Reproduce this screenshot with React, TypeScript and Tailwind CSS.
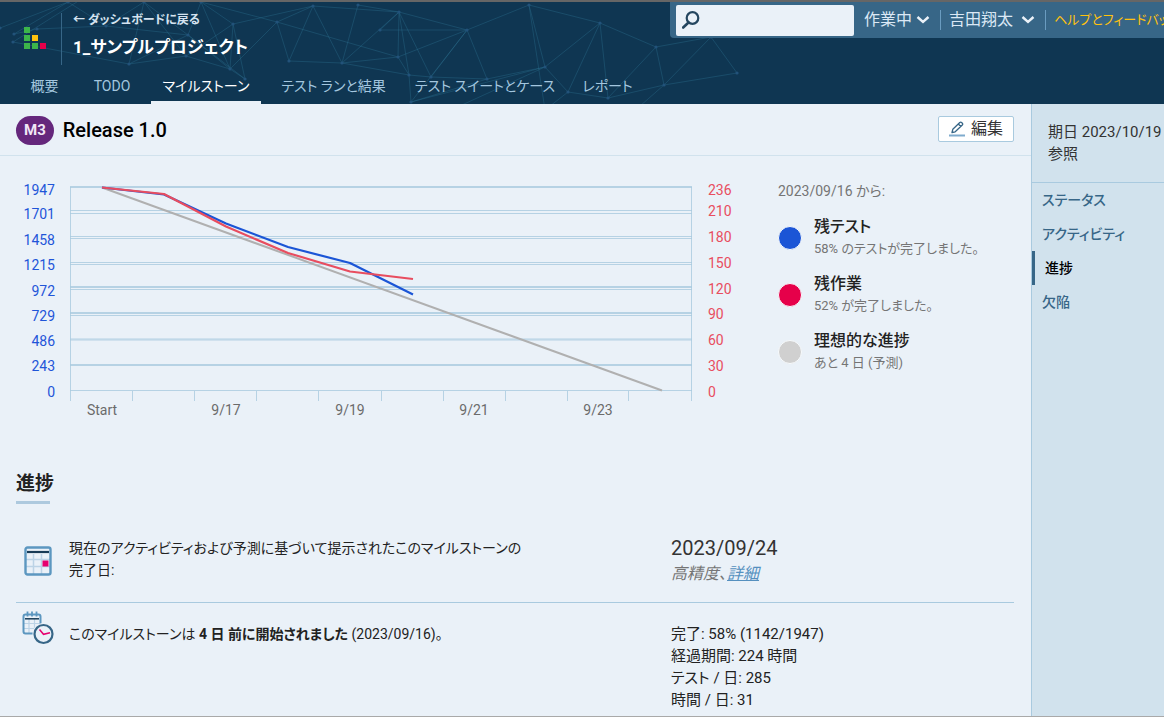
import { ReactNode } from "react";

const nodes = [
  [68, 2], [144, 2], [201, 2], [0, 28], [14, 34], [13, 42], [37, 29], [129, 64], [106, 26], [188, 35],
  [186, 56], [230, 69], [245, 79], [233, 24], [277, 22], [289, 61], [313, 6], [342, 63], [358, 5], [399, 12],
  [398, 57], [409, 75], [431, 77], [411, 102], [467, 30], [487, 79], [529, 5], [545, 67], [568, 92], [600, 23],
  [608, 98], [656, 47], [664, 85], [711, 37], [737, 73], [380, 30], [545, 110], [440, 115], [640, 106], [80, 0],
];

const edges = [
  [0, 3], [0, 4], [0, 8], [5, 39], [4, 6], [6, 8], [5, 7], [1, 7], [1, 9], [1, 10], [1, 8], [2, 9], [2, 13], [2, 14],
  [8, 9], [7, 9], [7, 10], [9, 11], [9, 12], [10, 11], [10, 13], [11, 13], [11, 12], [12, 13], [13, 16], [14, 16],
  [14, 15], [14, 11], [15, 16], [16, 17], [16, 19], [17, 18], [17, 19], [18, 19], [17, 20], [15, 17], [17, 21],
  [19, 24], [19, 20], [19, 21], [19, 22], [20, 24], [20, 21], [21, 22], [21, 23], [22, 24], [22, 25], [24, 25],
  [24, 26], [25, 27], [26, 27], [26, 29], [27, 29], [27, 28], [28, 29], [28, 30], [29, 30], [29, 31], [27, 23],
  [30, 31], [30, 32], [31, 32], [31, 33], [32, 33], [32, 34], [33, 34], [26, 36], [23, 25], [37, 27], [32, 38],
  [24, 35], [24, 23], [35, 19], [28, 36], [2, 11], [14, 20],
];

const tabs = [
  { label: "概要", width: "w-[57px]" },
  { label: "TODO", width: "w-16" },
  { label: "マイルストーン", width: "w-[110px]" },
  { label: "テスト ランと結果", width: "w-[131px]" },
  { label: "テスト スイートとケース", width: "w-[158px]" },
  { label: "レポート", width: "w-[73px]" },
];
const sections = ["ステータス", "アクティビティ", "進捗", "欠陥"];

const legend = [
  { title: "残テスト", text: "58% のテストが完了しました。", dot: "bg-[#1b55d6]" },
  { title: "残作業", text: "52% が完了しました。", dot: "bg-[#e6004a]" },
  { title: "理想的な進捗", text: "あと 4 日 (予測)", dot: "bg-[#d0d0d0]" },
];

const leftAxis = [
  ["1947", 195], ["1701", 219], ["1458", 245], ["1215", 270], ["972", 296],
  ["729", 321], ["486", 346], ["243", 371], ["0", 397],
] as const;
const rightAxis = [
  ["236", 195], ["210", 216], ["180", 242], ["150", 268], ["120", 294],
  ["90", 319], ["60", 345], ["30", 371], ["0", 397],
] as const;
const dates = [["Start", 102], ["9/17", 226], ["9/19", 350], ["9/21", 474], ["9/23", 598]] as const;

const gridLines = [186.5, 187.5, 210.5, 213.5, 236.5, 238.5, 262.5, 264.5, 286.5, 287.5, 289.5, 312.5, 313.5, 315.5, 339, 340, 364.5, 365.5, 390.5];
const ticks = [70.5, 132.5, 194.5, 256.5, 318.5, 381.5, 443.5, 505.5, 567.5, 628.5, 691.5];

function Network() {
  return (
    <svg width="760" height="102" viewBox="0 2 760 102" className="absolute left-0 top-0" aria-hidden="true">
      <g stroke="#2f7596" strokeOpacity="0.35">
        {edges.map(([a, b]) => (
          <line key={`${a}-${b}`} x1={nodes[a][0]} y1={nodes[a][1]} x2={nodes[b][0]} y2={nodes[b][1]} />
        ))}
      </g>
      <g fill="#22527a">
        {nodes.map(([x, y]) => (
          <circle key={`${x}-${y}`} cx={x} cy={y} r="1.6" />
        ))}
      </g>
    </svg>
  );
}

function Logo() {
  return (
    <svg width="22" height="22" viewBox="0 0 22 22" className="mt-2" aria-hidden="true">
      <path d="M0 0h6v6H0zM0 8h6v6H0zM0 16h6v6H0zM8 16h6v6H8z" fill="#3cb54a" />
      <path d="M8 8h6v6H8z" fill="#ffc20e" />
      <path d="M16 16h6v6h-6z" fill="#e6004a" />
    </svg>
  );
}

function Chevron() {
  return (
    <svg width="14" height="8" viewBox="0 0 14 8" fill="none" stroke="#eaf1f8" strokeWidth="2.4" aria-hidden="true">
      <path d="M1.5 1L7 6l5.500-5" />
    </svg>
  );
}

function TopBar() {
  return (
    <div className="flex h-9 w-[494px] shrink-0 items-center overflow-hidden whitespace-nowrap rounded-bl-sm bg-[#376687] text-base leading-6 text-[#dbe8f5]">
      <label className="ml-1.5 flex h-[31px] w-[178px] shrink-0 items-center rounded-xs bg-[#eaf1f8] pl-1.5">
        <svg width="18" height="18" viewBox="0 0 18 18" fill="none" stroke="#24465f" aria-label="検索">
          <circle cx="10.500" cy="7" r="5.800" strokeWidth="2.200" />
          <path d="M6.500 11.500L1.200 16.500" strokeWidth="2.600" strokeLinecap="round" />
        </svg>
        <input type="text" className="ml-2 w-36 bg-transparent text-sm text-black outline-none" />
      </label>
      <button className="ml-2.5 flex items-center gap-1">
        作業中
        <Chevron />
      </button>
      <span className="ml-2.5 h-5 w-px shrink-0 bg-[#6a9cc0]" />
      <button className="ml-2 flex items-center gap-2">
        吉田翔太
        <Chevron />
      </button>
      <span className="ml-2.5 h-5 w-px shrink-0 bg-[#6a9cc0]" />
      <button className="ml-2 text-[13px] text-[#ffc20e]">ヘルプとフィードバッ</button>
    </div>
  );
}

function Header() {
  return (
    <header className="relative h-[104px] border-t-2 border-[#666] bg-[#0f3652]">
      <Network />
      <div className="relative flex h-16 justify-between">
        <div className="flex items-center pl-6">
          <Logo />
          <div className="ml-[15px] mt-2.5 h-[52px] w-px bg-[#376687]" />
          <div className="ml-[11px]">
            <a href="#" className="block text-xs font-bold leading-[26px] text-[#d5e3f0]">
              ← ダッシュボードに戻る
            </a>
            <div className="text-[17px] font-bold leading-7 text-white">1_サンプルプロジェクト</div>
          </div>
        </div>
        <TopBar />
      </div>
      <nav className="relative flex gap-[7px] pl-4 text-center text-sm">
        {tabs.map((tab) => (
          <a
            key={tab.label}
            href="#"
            className={`h-[38px] whitespace-nowrap border-b-[3px] pt-2 leading-6 ${tab.width} ${
              tab.label === "マイルストーン" ? "border-[#eaf1f8] text-white" : "border-transparent text-[#a3c6df]"
            }`}
          >
            {tab.label}
          </a>
        ))}
      </nav>
    </header>
  );
}

function Chart() {
  return (
    <svg width="736" height="246" viewBox="16 176 736 246" className="shrink-0">
      <g stroke="#a9cadf" strokeOpacity="0.8">
        {gridLines.map((y) => (
          <line key={y} x1="70" x2="692" y1={y} y2={y} />
        ))}
        <path d="M70.500 187v204M691.500 187v204" />
        {ticks.map((x) => (
          <line key={x} x1={x} x2={x} y1="391" y2="401" />
        ))}
      </g>
      <g fill="none" strokeWidth="2" strokeLinejoin="round">
        <path d="M102 187.500L662 390.500" stroke="#b0b0b0" />
        <path d="M102 187.500L164 194.500L226 223.500L288 247L350 263L413 294.500" stroke="#1b55d6" strokeWidth="2.200" />
        <path d="M102 187.500L164 194L226 226.500L288 253L350 271.500L413 279" stroke="#e84d5f" strokeWidth="2.200" />
      </g>
      <g fill="#1f55d8" textAnchor="end" className="text-sm">
        {leftAxis.map(([label, y]) => (
          <text key={label} x="55" y={y}>{label}</text>
        ))}
      </g>
      <g fill="#e84d5f" className="text-sm">
        {rightAxis.map(([label, y]) => (
          <text key={label} x="708" y={y}>{label}</text>
        ))}
      </g>
      <g fill="#6b6b6b" textAnchor="middle" className="text-sm">
        {dates.map(([label, x]) => (
          <text key={label} x={x} y="415">{label}</text>
        ))}
      </g>
    </svg>
  );
}

function CalendarIcon() {
  return (
    <svg width="28" height="30" viewBox="0 0 28 30" fill="none" aria-hidden="true">
      <path d="M2 13.500h24M2 20.500h24M9.500 8v20M17.500 8v20" stroke="#bcd3e6" strokeWidth="1.500" />
      <rect x="1.500" y="1.500" width="25" height="27" rx="2" stroke="#5c97c0" strokeWidth="2.400" />
      <path d="M3 6h22" stroke="#173a56" strokeWidth="2.200" />
      <path d="M18.500 14.500h6v6h-6z" fill="#e6006e" />
    </svg>
  );
}

function CalendarClockIcon() {
  return (
    <svg width="32" height="34" viewBox="0 0 32 34" fill="none" aria-hidden="true">
      <path d="M2 12.500h16M2 17.500h12M7 8v14M12.500 8v10" stroke="#bcd3e6" strokeWidth="1.200" />
      <rect x="1.500" y="3.500" width="17" height="19" rx="2" stroke="#5c97c0" strokeWidth="2" />
      <path d="M5.500 0.500v5M10 0.500v5M14.500 0.500v5" stroke="#5c97c0" strokeWidth="1.800" />
      <path d="M3 7.800h14" stroke="#173a56" strokeWidth="1.500" />
      <circle cx="21.500" cy="23" r="11" fill="#eaf1f8" />
      <circle cx="21.500" cy="23" r="9" stroke="#376687" strokeWidth="2.200" />
      <path d="M17.500 18.500l4 4.800 6.500-1.500" stroke="#e6006e" strokeWidth="1.500" />
    </svg>
  );
}

function Row({ icon, text, children }: { icon: ReactNode; text: ReactNode; children: ReactNode }) {
  return (
    <div className="flex leading-[22px] text-[#222]">
      <div className="w-[53px] shrink-0 pl-1.5">{icon}</div>
      <div className="flex-1 pt-5 text-sm leading-[22px]">{text}</div>
      <div className="w-[343px] shrink-0 pt-5 text-[15px] leading-[22px]">{children}</div>
    </div>
  );
}

export default function App() {
  return (
    <div className="flex min-h-screen flex-col border-b border-[#a9a9a9] bg-[#eaf1f8] font-['Roboto','Noto_Sans_CJK_JP',sans-serif] [font-feature-settings:'palt']">
      <Header />
      <div className="flex flex-1">
        <main className="min-w-0 flex-1">
          <div className="flex h-[52px] items-start border-b border-[#d1e2ed] pl-4 pr-[17px] pt-3">
            <span className="rounded-full bg-[#65277c] px-2 text-[15px] font-bold leading-[29px] text-[#f1e6f6]">M3</span>
            <h1 className="ml-[9px] flex-1 text-xl font-medium leading-[29px] text-black">Release 1.0</h1>
            <button className="flex h-[26px] items-center gap-1.5 rounded-xs border border-[#a9cadf] bg-white px-2.5 text-base text-[#333]">
              <svg width="16" height="16" viewBox="0 0 16 16" fill="none" aria-hidden="true">
                <path d="M3 11.500l.8-3.200L10.800 1.500a1.300 1.300 0 0 1 1.800 0l.7.7a1.300 1.300 0 0 1 0 1.800L6.200 10.800zM9.300 3l2.500 2.500" stroke="#376687" strokeWidth="1.300" strokeLinejoin="round" />
                <path d="M0 14.500h16" stroke="#7fabcd" strokeWidth="2" />
              </svg>
              編集
            </button>
          </div>

          <div className="flex px-4 pt-5">
            <Chart />
            <div className="ml-[26px] pt-[3px]">
              <p className="text-sm leading-6 text-[#757575]">2023/09/16 から:</p>
              {legend.map((item) => (
                <div key={item.title} className="mt-[13px] flex h-11 items-center whitespace-nowrap">
                  <span className={`mr-3 size-6 shrink-0 rounded-full border border-[#f8fbfd] ${item.dot}`} />
                  <div>
                    <div className="text-base font-medium leading-[22px] text-[#222]">{item.title}</div>
                    <div className="text-[13px] leading-[22px] text-[#757575]">{item.text}</div>
                  </div>
                </div>
              ))}
            </div>
          </div>

          <section className="pl-4 pr-[17px] pt-12">
            <h2 className="text-[19px] font-bold leading-7 text-[#222]">進捗</h2>
            <div className="mt-[3px] h-[3px] w-[34px] bg-[#adc9de]" />
            <div className="mt-[5px] border-b border-[#a9cadf] pb-[17px] pt-2">
              <Row
                icon={<div className="pl-0.5 pt-[29px]"><CalendarIcon /></div>}
                text={<>現在のアクティビティおよび予測に基づいて提示されたこのマイルストーンの<br />完了日:</>}
              >
                <div className="text-xl leading-[22px] text-[#333]">2023/09/24</div>
                <div className="mt-1 text-base italic leading-[22px] text-[#757575]">
                  高精度、
                  <a href="#" className="text-[#5590bf] underline">詳細</a>
                </div>
              </Row>
            </div>
            <Row
              icon={<div className="pt-2"><CalendarClockIcon /></div>}
              text={<>このマイルストーンは <b>4 日 前に開始されました</b> (2023/09/16)。</>}
            >
              <p>完了: 58% (1142/1947)</p>
              <p>経過期間: 224 時間</p>
              <p>テスト / 日: 285</p>
              <p>時間 / 日: 31</p>
            </Row>
          </section>
        </main>

        <aside className="w-[133px] shrink-0 border-l border-[#a9cadf] bg-[#d1e2ed]">
          <div className="h-[79px] whitespace-nowrap border-b border-[#a9cadf] pl-4 pt-[17px] text-[15px] leading-[22px] text-[#333]">
            <p>期日 2023/10/19</p>
            <p>参照</p>
          </div>
          <nav className="flex flex-col text-sm font-medium">
            {sections.map((section) => (
              <a
                key={section}
                href="#"
                className={`h-[34px] whitespace-nowrap leading-[34px] ${
                  section === "進捗" ? "border-l-[3px] border-[#376687] pl-2.5 text-black" : "pl-2.5 text-[#376687]"
                }`}
              >
                {section}
              </a>
            ))}
          </nav>
        </aside>
      </div>
    </div>
  );
}
